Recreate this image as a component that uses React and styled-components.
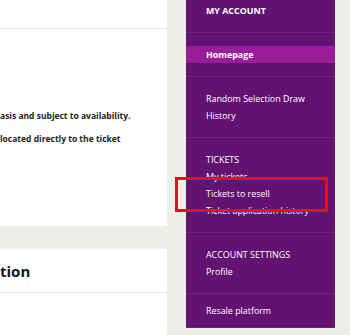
import React from 'react'
import styled, { createGlobalStyle } from 'styled-components'

const GlobalStyle = createGlobalStyle`
  html, body {
    margin: 0;
    padding: 0;
    background: #efeee8;
    overflow: hidden;
  }
  body {
    font-family: "Open Sans", "Liberation Sans", sans-serif;
  }
`

const Page = styled.div`
  display: flex;
  align-items: flex-start;
  width: 350px;
  height: 335px;
  overflow: hidden;
`

const Main = styled.div`
  display: flex;
  flex-direction: column;
  gap: 23px;
  width: 167px;
  flex-shrink: 0;
`

const Card = styled.div`
  background: #fff;
  height: ${p => p.height}px;
  overflow: hidden;
`

const CardHead = styled.div`
  height: ${p => p.height}px;
  border-bottom: 1px solid #e8e8e4;
  display: flex;
  align-items: center;
  font-size: 15px;
  font-weight: 700;
  color: #111;
  white-space: nowrap;
`

const CardBody = styled.div`
  padding-top: ${p => p.top}px;
  display: flex;
  flex-direction: column;
  gap: 10px;
`

const Line = styled.p`
  margin: 0;
  font-size: 8.5px;
  line-height: 13px;
  font-weight: 700;
  color: #222;
  white-space: nowrap;
`

const SideBar = styled.nav`
  position: relative;
  margin-left: 19px;
  width: 149px;
  flex-shrink: 0;
  background: #621270;
  color: #fff;
  font-size: 8.9px;
`

const Section = styled.div`
  padding: ${p => p.pad}px 0;
  border-bottom: 1px solid #74217f;
`

const Spacer = styled.div`
  height: ${p => p.h}px;
`

const Item = styled.div`
  padding: 0 20px;
  line-height: 17px;
  height: 17px;
  font-weight: ${p => (p.bold ? 700 : 400)};
  background: ${p => (p.active ? '#9b1c99' : 'transparent')};
  white-space: nowrap;
`

const Marker = styled.div`
  position: absolute;
  left: -11px;
  top: 177px;
  width: 147px;
  height: 29px;
  border: 3px solid #e3101c;
  pointer-events: none;
`

function App() {
  return (
    <Page>
      <GlobalStyle />
      <Main>
        <Card height={226}>
          <CardHead height={28} />
          <CardBody top={80}>
            <Line>asis and subject to availability.</Line>
            <Line>located directly to the ticket</Line>
          </CardBody>
        </Card>
        <Card height={100}>
          <CardHead height={43}>tion</CardHead>
        </Card>
      </Main>
      <SideBar>
        <Section pad={2}>
          <Item bold>MY ACCOUNT</Item>
          <Spacer h={11} />
        </Section>
        <Section pad={13}>
          <Item bold active>Homepage</Item>
        </Section>
        <Section pad={13}>
          <Item>Random Selection Draw</Item>
          <Item>History</Item>
        </Section>
        <Section pad={13}>
          <Item>TICKETS</Item>
          <Item>My tickets</Item>
          <Item>Tickets to resell</Item>
          <Item>Ticket application history</Item>
        </Section>
        <Section pad={13}>
          <Item>ACCOUNT SETTINGS</Item>
          <Item>Profile</Item>
        </Section>
        <Section pad={8}>
          <Item>Resale platform</Item>
        </Section>
        <Marker />
      </SideBar>
    </Page>
  )
}

export default App
